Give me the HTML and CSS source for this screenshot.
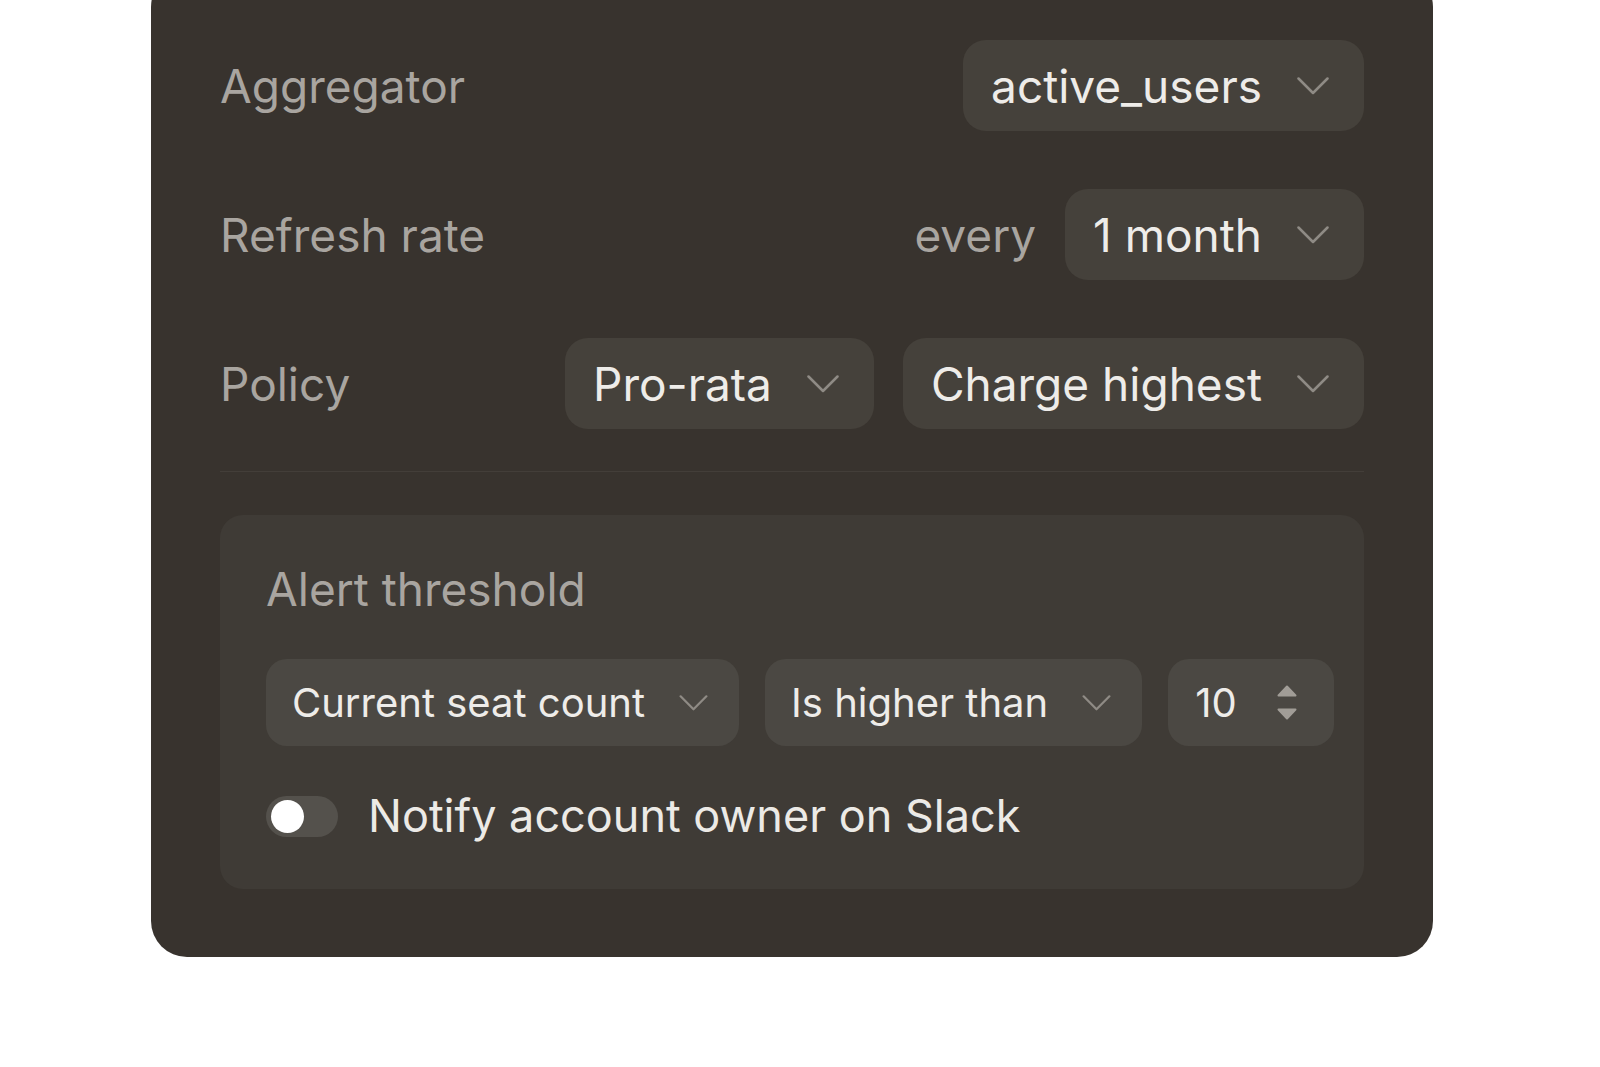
FILE: index.html
```html
<!DOCTYPE html>
<html lang="en">
<head>
<meta charset="utf-8">
<title>Seat metric settings</title>
<link rel="stylesheet" href="styles.css">
</head>
<body>
<section class="card">
  <div class="rows">
    <div class="row">
      <span class="label">Aggregator</span>
      <div class="controls">
        <button class="select">
          <span>active_users</span>
          <svg class="chevron" viewBox="0 0 32 18"><polyline points="1.5,1.5 16,16 30.5,1.5"/></svg>
        </button>
      </div>
    </div>
    <div class="row">
      <span class="label">Refresh rate</span>
      <div class="controls">
        <span class="label">every</span>
        <button class="select">
          <span>1 month</span>
          <svg class="chevron" viewBox="0 0 32 18"><polyline points="1.5,1.5 16,16 30.5,1.5"/></svg>
        </button>
      </div>
    </div>
    <div class="row">
      <span class="label">Policy</span>
      <div class="controls">
        <button class="select">
          <span>Pro-rata</span>
          <svg class="chevron" viewBox="0 0 32 18"><polyline points="1.5,1.5 16,16 30.5,1.5"/></svg>
        </button>
        <button class="select">
          <span>Charge highest</span>
          <svg class="chevron" viewBox="0 0 32 18"><polyline points="1.5,1.5 16,16 30.5,1.5"/></svg>
        </button>
      </div>
    </div>
  </div>

  <hr class="divider">

  <div class="alert">
    <h3 class="alert-title">Alert threshold</h3>
    <div class="filters">
      <button class="select select-sm">
        <span>Current seat count</span>
        <svg class="chevron chevron-sm" viewBox="0 0 32 18"><polyline points="1.5,1.5 16,16 30.5,1.5"/></svg>
      </button>
      <button class="select select-sm">
        <span>Is higher than</span>
        <svg class="chevron chevron-sm" viewBox="0 0 32 18"><polyline points="1.5,1.5 16,16 30.5,1.5"/></svg>
      </button>
      <div class="stepper">
        <span>10</span>
        <svg class="arrows" viewBox="0 0 20 36">
          <path d="M10 1.5 L18.5 10.5 L1.5 10.5 Z"/>
          <path d="M1.5 24.5 L18.5 24.5 L10 33.5 Z"/>
        </svg>
      </div>
    </div>
    <label class="notify">
      <span class="toggle"><span class="knob"></span></span>
      <span>Notify account owner on Slack</span>
    </label>
  </div>
</section>
</body>
</html>
```

FILE: styles.css
```css
html, body {
  margin: 0;
  background: #ffffff;
}

body {
  font-family: "Inter", "Noto Sans", sans-serif;
  overflow: hidden;
}

.card {
  box-sizing: border-box;
  width: 1282px;
  margin: -29px 0 0 151px;
  padding: 69px 69px 68px;
  background: #38332e;
  border-radius: 36px;
  display: flex;
  flex-direction: column;
}

.rows {
  display: flex;
  flex-direction: column;
  gap: 58px;
}

.row {
  height: 91px;
  display: flex;
  align-items: center;
  justify-content: space-between;
}

.label {
  font-size: 46px;
  line-height: 56px;
  color: #a9a5a0;
  white-space: nowrap;
}

.controls {
  display: flex;
  align-items: center;
  gap: 29px;
}

.select {
  box-sizing: border-box;
  flex-shrink: 0;
  height: 91px;
  display: inline-flex;
  align-items: center;
  gap: 35px;
  padding: 0 35px 0 28px;
  border: 0;
  border-radius: 23px;
  background: #45413b;
  color: #eeece9;
  font: inherit;
  font-size: 46px;
  line-height: 56px;
  white-space: nowrap;
  cursor: pointer;
}

.chevron {
  width: 32px;
  height: 18px;
  fill: none;
  stroke: #8f8b85;
  stroke-width: 2.5;
  stroke-linecap: round;
  stroke-linejoin: round;
}

.divider {
  margin: 42px 0 43px;
  border: 0;
  height: 1px;
  background: #433e39;
}

.alert {
  background: #3f3b36;
  border-radius: 23px;
  padding: 46px 46px 45px;
  display: flex;
  flex-direction: column;
  gap: 42px;
}

.alert-title {
  margin: 0;
  font-size: 46px;
  line-height: 56px;
  font-weight: 400;
  color: #a9a5a0;
}

.filters {
  display: flex;
  align-items: center;
  gap: 26px;
}

.select-sm {
  height: 87px;
  gap: 34px;
  padding: 0 31px 0 26px;
  border-radius: 21px;
  background: #4b4843;
  font-size: 40px;
  line-height: 48px;
}

.chevron-sm {
  width: 29px;
  height: 16px;
}

.stepper {
  box-sizing: border-box;
  flex-shrink: 0;
  height: 87px;
  display: flex;
  align-items: center;
  gap: 40px;
  padding: 0 37px 0 27px;
  border-radius: 21px;
  background: #4b4843;
  color: #eeece9;
  font-size: 40px;
  line-height: 48px;
}

.arrows {
  width: 20px;
  height: 36px;
  fill: #a19d97;
  stroke: #a19d97;
  stroke-width: 2;
  stroke-linejoin: round;
}

.notify {
  display: flex;
  align-items: center;
  gap: 30px;
  font-size: 45px;
  line-height: 56px;
  color: #eceae6;
}

.toggle {
  box-sizing: border-box;
  flex-shrink: 0;
  width: 72px;
  height: 41px;
  padding: 0 5px;
  display: flex;
  align-items: center;
  border-radius: 21px;
  background: #54514c;
}

.knob {
  width: 33px;
  height: 33px;
  border-radius: 50%;
  background: #ffffff;
}
```
